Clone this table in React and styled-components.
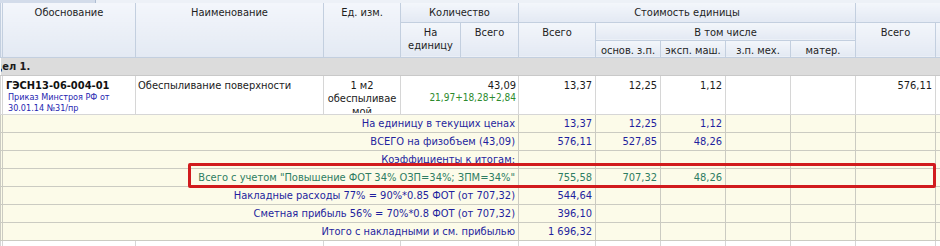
import React from "react";
import styled, { createGlobalStyle, css } from "styled-components";

const GlobalStyle = createGlobalStyle`
  html, body {
    margin: 0;
    padding: 0;
    background: #fff;
  }
  body {
    font-family: "DejaVu Sans Condensed", "DejaVu Sans", sans-serif;
    font-size: 11px;
    color: #1b1b1b;
  }
`;

const Frame = styled.div`
  position: relative;
  width: 940px;
  height: 246px;
  overflow: hidden;
  background: #fff;
`;

const TabStrip = styled.div`
  display: flex;
  height: 3px;
  background: #edf1f7;
`;

const Tab = styled.div`
  width: 95px;
  background: #d3dcea;
  border-right: 1px solid #aebdd2;
`;

const Sheet = styled.table`
  border-collapse: collapse;
  table-layout: fixed;
  width: 1000px;
`;

const Th = styled.th`
  padding: 3px 2px 0;
  vertical-align: top;
  text-align: center;
  font-weight: normal;
  line-height: 13px;
  color: #1e1e1e;
  background: linear-gradient(#f3f6fb, #e3e9f3);
  border: 1px solid #c3cfdf;
  border-top: none;
  white-space: nowrap;
  overflow: hidden;
`;

const HeadRow = styled.tr`
  height: ${(p) => p.$h}px;
`;

const SectionCell = styled.td`
  height: 17px;
  padding: 0;
  background: #dcdcdc;
  border-bottom: 1px solid #c9c9c9;
  font-weight: bold;
  line-height: 17px;
  white-space: nowrap;
  overflow: hidden;
  text-indent: -26px;
`;

const Row = styled.tr`
  height: ${(p) => p.$h}px;
  background: ${(p) => (p.$total ? "#fcfbe9" : "#fff")};
`;

const Td = styled.td`
  padding: ${(p) => (p.$pad ? p.$pad : "0 3px")};
  vertical-align: ${(p) => (p.$top ? "top" : "middle")};
  text-align: ${(p) => p.$align || "left"};
  line-height: 13px;
  border: 1px solid ${(p) => (p.$total ? "#cbcbc2" : "#d6d6d6")};
  white-space: nowrap;
  overflow: hidden;
  color: ${(p) =>
    p.$tone === "blue" ? "#1f1f9e" : p.$tone === "green" ? "#2e7d62" : "#1b1b1b"};
  ${(p) =>
    p.$clip &&
    css`
      height: ${p.$clip}px;
    `}
`;

const Code = styled.div`
  font-weight: bold;
  color: #111;
`;

const Note = styled.div`
  font-size: ${(p) => (p.$green ? 10 : 9)}px;
  line-height: 11px;
  color: ${(p) => (p.$green ? "#2d8a2d" : "#2525b0")};
  padding-left: ${(p) => (p.$green ? 0 : 2)}px;
`;

const Wrap = styled.div`
  white-space: normal;
  height: 37px;
  overflow: hidden;
  padding-top: 3px;
  box-sizing: border-box;
`;

const Highlight = styled.div`
  position: absolute;
  left: 188px;
  top: 163px;
  width: 748px;
  height: 25px;
  box-sizing: border-box;
  border: 3px solid #d11b1e;
  border-radius: 2px;
  pointer-events: none;
`;

const widths = [2, 133, 188, 77, 60, 58, 77, 65, 65, 65, 65, 80, 65];

const totals = [
  { label: "На единицу в текущих ценах", vals: ["13,37", "12,25", "1,12"] },
  { label: "ВСЕГО на физобъем (43,09)", vals: ["576,11", "527,85", "48,26"] },
  { label: "Коэффициенты к итогам:", vals: [] },
  {
    label: 'Всего с учетом "Повышение ФОТ 34% ОЗП=34%; ЗПМ=34%"',
    vals: ["755,58", "707,32", "48,26"],
    tone: "green",
  },
  { label: "Накладные расходы 77% = 90%*0.85 ФОТ (от 707,32)", vals: ["544,64"] },
  { label: "Сметная прибыль 56% = 70%*0.8 ФОТ (от 707,32)", vals: ["396,10"] },
  { label: "Итого с накладными и см. прибылью", vals: ["1 696,32"] },
];

const TotalLine = ({ label, vals, tone = "blue" }) => (
  <Row $total $h={18}>
    <Td $total />
    <Td $total colSpan={5} $align="right" $tone={tone}>
      {label}
    </Td>
    {Array.from({ length: 7 }).map((_, i) => (
      <Td key={i} $total $align="right" $tone={tone}>
        {vals[i] || ""}
      </Td>
    ))}
  </Row>
);

export default function App() {
  return (
    <>
      <GlobalStyle />
      <Frame>
        <TabStrip>
          <Tab />
        </TabStrip>
        <Sheet>
          <colgroup>
            {widths.map((w, i) => (
              <col key={i} style={{ width: w }} />
            ))}
          </colgroup>
          <thead>
            <HeadRow $h={19}>
              <Th rowSpan={3} />
              <Th rowSpan={3}>Обоснование</Th>
              <Th rowSpan={3}>Наименование</Th>
              <Th rowSpan={3}>Ед. изм.</Th>
              <Th colSpan={2}>Количество</Th>
              <Th colSpan={5}>Стоимость единицы</Th>
              <Th colSpan={2} />
            </HeadRow>
            <HeadRow $h={18}>
              <Th rowSpan={2}>
                На
                <br />
                единицу
              </Th>
              <Th rowSpan={2}>Всего</Th>
              <Th rowSpan={2}>Всего</Th>
              <Th colSpan={4}>В том числе</Th>
              <Th rowSpan={2}>Всего</Th>
              <Th rowSpan={2} />
            </HeadRow>
            <HeadRow $h={17}>
              <Th>основ. з.п.</Th>
              <Th>эксп. маш.</Th>
              <Th>з.п. мех.</Th>
              <Th>матер.</Th>
            </HeadRow>
          </thead>
          <tbody>
            <tr>
              <SectionCell colSpan={13}>Раздел 1.</SectionCell>
            </tr>
            <Row $h={38}>
              <Td />
              <Td $top $pad="3px 3px 0">
                <Code>ГЭСН13-06-004-01</Code>
                <Note>Приказ Минстроя РФ от</Note>
                <Note>30.01.14 №31/пр</Note>
              </Td>
              <Td $top $pad="3px 2px 0">
                Обеспыливание поверхности
              </Td>
              <Td $top $align="center" $pad="0 1px">
                <Wrap>
                  1 м2
                  <br />
                  обеспыливае
                  <br />
                  мой
                </Wrap>
              </Td>
              <Td $top colSpan={2} $align="right" $pad="3px 2px 0">
                <div>43,09</div>
                <Note $green>21,97+18,28+2,84</Note>
              </Td>
              <Td $top $align="right" $pad="3px 3px 0">
                13,37
              </Td>
              <Td $top $align="right" $pad="3px 3px 0">
                12,25
              </Td>
              <Td $top $align="right" $pad="3px 3px 0">
                1,12
              </Td>
              <Td />
              <Td />
              <Td $top $align="right" $pad="3px 3px 0">
                576,11
              </Td>
              <Td />
            </Row>
            {totals.map((t) => (
              <TotalLine key={t.label} {...t} />
            ))}
            <Row $h={18}>
              <Td />
              <Td $top $pad="4px 3px 0">
                <Code>ГЭСН27-07-001-01</Code>
              </Td>
              <Td $top $pad="4px 2px 0">
                Нанесение обеспыливающей пропитки
              </Td>
              <Td $top $align="center" $pad="4px 1px 0">
                100 м2
              </Td>
              <Td $top colSpan={2} $align="right" $pad="4px 2px 0">
                0,4309
              </Td>
              <Td $top $align="right" $pad="4px 3px 0">
                7 580,00
              </Td>
              <Td $top $align="right" $pad="4px 3px 0">
                5 311,15
              </Td>
              <Td $top $align="right" $pad="4px 3px 0">
                34,41
              </Td>
              <Td $top $align="right" $pad="4px 3px 0">
                24,24
              </Td>
              <Td />
              <Td $top $align="right" $pad="4px 3px 0">
                3 111,15
              </Td>
              <Td />
            </Row>
          </tbody>
        </Sheet>
        <Highlight />
      </Frame>
    </>
  );
}
